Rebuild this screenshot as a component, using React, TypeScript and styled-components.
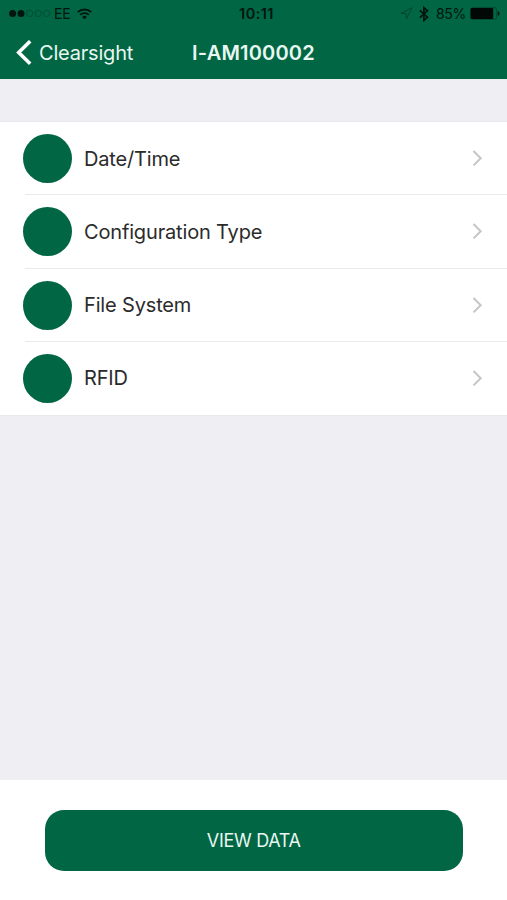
import React from "react";
import styled, { createGlobalStyle } from "styled-components";

const GREEN = "#006644";

const GlobalStyle = createGlobalStyle`
  * { box-sizing: border-box; }
  body { margin: 0; }
`;

const Screen = styled.div`
  display: flex;
  flex-direction: column;
  width: 507px;
  height: 900px;
  overflow: hidden;
  background: #efeef3;
  font-family: Inter, "Liberation Sans", sans-serif;
`;

const Header = styled.header`
  flex: none;
  height: 79px;
  background: ${GREEN};
`;

const StatusBar = styled.div`
  display: grid;
  grid-template-columns: 1fr auto 1fr;
  align-items: center;
  height: 27px;
  padding: 0 7px 0 9px;
  color: #03150f;
  font-size: 14px;
  line-height: 27px;
`;

const StatusGroup = styled.div<{ $end?: boolean }>`
  display: flex;
  align-items: center;
  justify-content: ${(p) => (p.$end ? "flex-end" : "flex-start")};
  height: 27px;
`;

const Carrier = styled.span`
  margin: 0 7px 0 3px;
  font-size: 14px;
  letter-spacing: -0.2px;
`;

const Clock = styled.span`
  margin-left: 4px;
  font-size: 14.5px;
  font-weight: 600;
  letter-spacing: 0.45px;
`;

const BatteryLevel = styled.span`
  margin: 0 4px 0 7px;
  font-size: 14px;
  letter-spacing: -0.3px;
`;

const NavBar = styled.nav`
  display: grid;
  grid-template-columns: 1fr auto 1fr;
  align-items: center;
  height: 52px;
  padding: 0 16px;
  color: #e9f7f1;
`;

const BackLink = styled.a`
  display: flex;
  align-items: center;
  gap: 7px;
  font-size: 20px;
  line-height: 52px;
  letter-spacing: -0.2px;
`;

const Title = styled.h1`
  margin: 0;
  font-size: 20px;
  font-weight: 600;
  line-height: 52px;
  letter-spacing: 0.2px;
`;

const List = styled.ul`
  flex: none;
  margin: 43px 0 0;
  padding: 0;
  height: 292.5px;
  list-style: none;
  background: #fff;
  box-shadow: 0 0 0 1px #e9e9ec;
`;

const Row = styled.li`
  display: flex;
  align-items: center;
  height: 73.25px;
  padding: 0 24px 0 23px;
  background: linear-gradient(#ebebed, #ebebed) 25px 100% / 100% 1px no-repeat;

  &:last-child { background: none; }
`;

const Dot = styled.span`
  width: 49px;
  height: 49px;
  border-radius: 50%;
  background: ${GREEN};
`;

const Label = styled.span`
  flex: 1;
  margin-left: 12px;
  color: #2b2b2b;
  font-size: 20px;
  line-height: 28px;
  letter-spacing: -0.16px;
`;

const Footer = styled.footer`
  margin-top: auto;
  height: 120px;
  padding: 29.5px 44px 0 44.5px;
  background: #fff;
`;

const ViewButton = styled.button`
  display: block;
  width: 100%;
  height: 61px;
  padding: 0;
  border: 0;
  border-radius: 19px;
  background: ${GREEN};
  color: #e9f7f1;
  font-family: inherit;
  font-size: 18px;
  letter-spacing: -0.3px;
`;

const SignalDots = () => (
  <svg width="42" height="10" viewBox="0 0 42 10">
    <circle cx="3.6" cy="4.4" r="3.5" fill="#03150f" />
    <circle cx="12" cy="4.4" r="3.5" fill="#03150f" />
    {[20.6, 29.2, 37.6].map((cx) => (
      <circle key={cx} cx={cx} cy="4.4" r="3.2" fill="none" stroke="#024b33" strokeWidth="0.9" />
    ))}
  </svg>
);

const WifiIcon = () => (
  <svg width="15" height="12" viewBox="0 0 15 12" fill="none" stroke="#03150f" strokeWidth="1.9">
    <path d="M0.8 4.2a9.5 9.5 0 0 1 13.4 0M3.2 6.9a6.1 6.1 0 0 1 8.6 0" />
    <path d="M7.5 11.3 5.1 8.9a3.4 3.4 0 0 1 4.8 0z" fill="#03150f" stroke="none" />
  </svg>
);

const LocationIcon = () => (
  <svg width="13" height="13" viewBox="0 0 13 13" fill="none" stroke="#024532" strokeWidth="1">
    <path d="M12 0.8 0.9 6.3l5.3.4.3 5.2z" />
  </svg>
);

const BluetoothIcon = () => (
  <svg width="10" height="16" viewBox="0 0 10 16" fill="none" stroke="#03150f" strokeWidth="1.7">
    <path d="M0.8 4.3 8.5 11.2 4.9 14.4V1.6l3.6 3.2L0.8 11.7" />
  </svg>
);

const BatteryIcon = () => (
  <svg width="30" height="13" viewBox="0 0 30 13">
    <rect x="0.8" y="0.8" width="26" height="11.4" rx="2.2" fill="none" stroke="#024532" />
    <rect x="0.6" y="1" width="22.6" height="11" rx="1.2" fill="#010805" />
    <path d="M27.8 4.2c2.4.6 2.4 4 0 4.6z" fill="#03150f" />
  </svg>
);

const BackIcon = () => (
  <svg width="16" height="26" viewBox="0 0 16 26" fill="none" stroke="#fff" strokeWidth="3.6">
    <path d="M14.2 1.2 2.7 12.5l11.5 11.3" />
  </svg>
);

const Chevron = () => (
  <svg width="11" height="17" viewBox="0 0 11 17" fill="none" stroke="#c5c5c9" strokeWidth="2">
    <path d="m1.5 1 7.2 7.2-7.2 7.2" />
  </svg>
);

const items = ["Date/Time", "Configuration Type", "File System", "RFID"];

const IconGap = styled.span`
  width: 6px;
`;

export default function App() {
  return (
    <Screen>
      <GlobalStyle />
      <Header>
        <StatusBar>
          <StatusGroup>
            <SignalDots />
            <Carrier>EE</Carrier>
            <WifiIcon />
          </StatusGroup>
          <Clock>10:11</Clock>
          <StatusGroup $end>
            <LocationIcon />
            <IconGap />
            <BluetoothIcon />
            <BatteryLevel>85%</BatteryLevel>
            <BatteryIcon />
          </StatusGroup>
        </StatusBar>
        <NavBar>
          <BackLink>
            <BackIcon />
            Clearsight
          </BackLink>
          <Title>I-AM100002</Title>
        </NavBar>
      </Header>
      <List>
        {items.map((label) => (
          <Row key={label}>
            <Dot />
            <Label>{label}</Label>
            <Chevron />
          </Row>
        ))}
      </List>
      <Footer>
        <ViewButton>VIEW DATA</ViewButton>
      </Footer>
    </Screen>
  );
}
